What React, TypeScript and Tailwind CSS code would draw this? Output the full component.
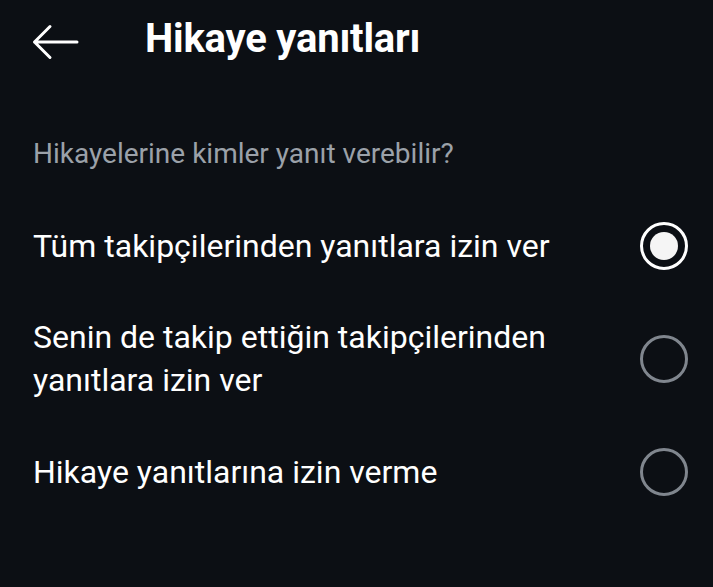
import { useState } from 'react';

const options = [
  'Tüm takipçilerinden yanıtlara izin ver',
  'Senin de takip ettiğin takipçilerinden yanıtlara izin ver',
  'Hikaye yanıtlarına izin verme',
];

function Radio({ checked }: { checked: boolean }) {
  return checked ? (
    <span className="flex h-12 w-12 shrink-0 items-center justify-center rounded-full border-[3.5px] border-white">
      <span className="h-7 w-7 rounded-full bg-[#f5f5f5]" />
    </span>
  ) : (
    <span className="h-12 w-12 shrink-0 rounded-full border-[3px] border-[#80868e]" />
  );
}

export default function App() {
  const [selected, setSelected] = useState(0);

  return (
    <div className="min-h-[587px] w-[713px] bg-[#0c0f14] font-['Roboto',sans-serif] text-white">
      <header className="flex h-[84px] items-center">
        <button className="ml-[32px] flex h-10 w-[47px] items-center">
          <svg width="47" height="36" viewBox="0 0 47 36" fill="none" stroke="white" strokeWidth="3" strokeLinecap="round" strokeLinejoin="round">
            <path d="M45 18H2.5M18 2.5L2.5 18L18 33.5" />
          </svg>
        </button>
        <h1 className="mb-[6px] ml-[66px] text-[40px] font-bold leading-[48px] tracking-[-0.2px]">Hikaye yanıtları</h1>
      </header>

      <p className="mt-[53px] px-[33px] text-[28px] leading-[33px] text-[#9ba1a9]">Hikayelerine kimler yanıt verebilir?</p>

      <div className="mt-[52px] flex flex-col gap-[46px]">
        {options.map((label, i) => (
          <button
            key={label}
            onClick={() => setSelected(i)}
            className="flex items-center justify-between pl-[33px] pr-[25px] text-left"
          >
            <span className="max-w-[560px] text-[32px] leading-[43px]">{label}</span>
            <Radio checked={selected === i} />
          </button>
        ))}
      </div>
    </div>
  );
}
